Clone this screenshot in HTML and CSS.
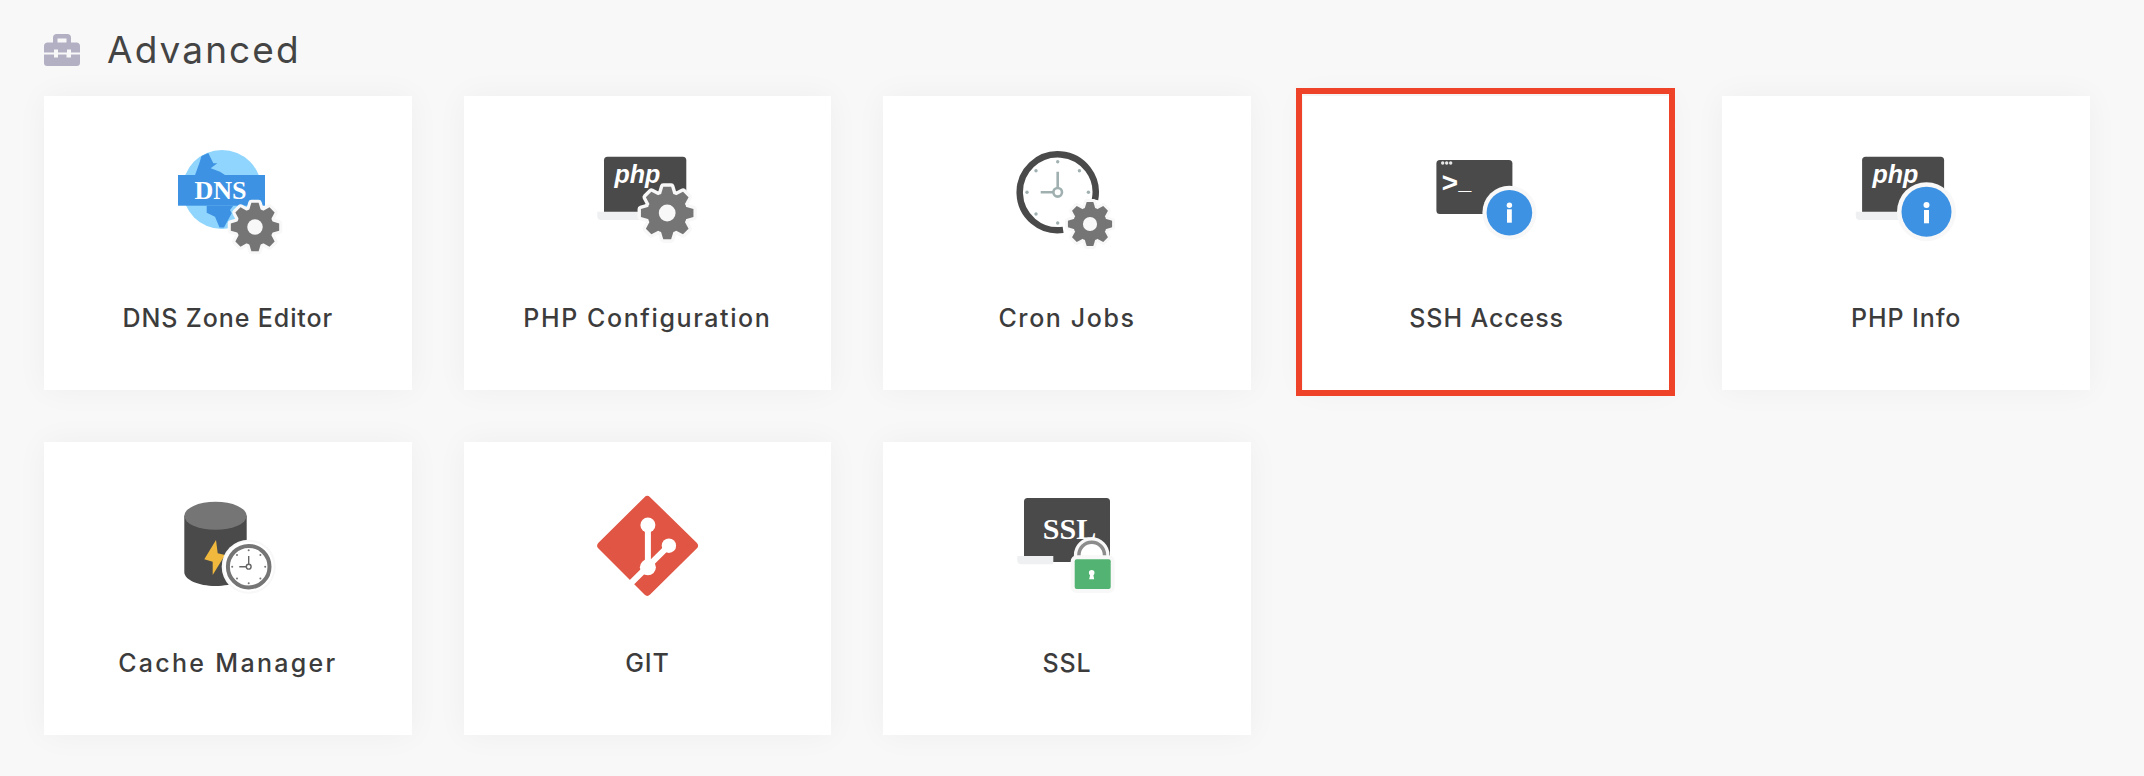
FILE: index.html
```html
<!DOCTYPE html>
<html lang="en">
<head>
<meta charset="utf-8">
<title>Advanced</title>
<link rel="stylesheet" href="styles.css">
</head>
<body>
<main class="page">
  <header class="section-head">
    <svg class="section-icon" viewBox="0 0 36 32" aria-hidden="true">
      <path d="M9 9V3.500C9 1.500 10.500 0 12.500 0h11C25.500 0 27 1.500 27 3.500V9h-4.500V4.500h-9V9z" fill="#b3b0c4"/>
      <path d="M0 12c0-2 1.500-3.500 3.500-3.500h29C34.500 8.500 36 10 36 12v6.500H27V15.500h-4v3h-9v-3H10v3H0z" fill="#b3b0c4"/>
      <path d="M0 20.500h10v3h4v-3h8.500v3h4.500v-3h9V29c0 1.700-1.300 3-3 3H3c-1.700 0-3-1.300-3-3z" fill="#b3b0c4"/>
    </svg>
    <h1 class="section-title">Advanced</h1>
  </header>

  <section class="grid">
    <a class="card">
      <svg class="icon" viewBox="0 0 140 120" aria-hidden="true">
        <defs>
          <symbol id="gear" viewBox="-120 -120 240 240">
            <g fill="#f8f8f8" stroke="#f8f8f8" stroke-width="26" stroke-linejoin="round">
              <circle r="76"/>
              <polygon points="-24,-70 -15,-100 15,-100 24,-70"/>
              <polygon points="-24,-70 -15,-100 15,-100 24,-70" transform="rotate(45)"/>
              <polygon points="-24,-70 -15,-100 15,-100 24,-70" transform="rotate(90)"/>
              <polygon points="-24,-70 -15,-100 15,-100 24,-70" transform="rotate(135)"/>
              <polygon points="-24,-70 -15,-100 15,-100 24,-70" transform="rotate(180)"/>
              <polygon points="-24,-70 -15,-100 15,-100 24,-70" transform="rotate(225)"/>
              <polygon points="-24,-70 -15,-100 15,-100 24,-70" transform="rotate(270)"/>
              <polygon points="-24,-70 -15,-100 15,-100 24,-70" transform="rotate(315)"/>
            </g>
            <g fill="#757575">
              <circle r="76"/>
              <polygon points="-24,-70 -15,-100 15,-100 24,-70"/>
              <polygon points="-24,-70 -15,-100 15,-100 24,-70" transform="rotate(45)"/>
              <polygon points="-24,-70 -15,-100 15,-100 24,-70" transform="rotate(90)"/>
              <polygon points="-24,-70 -15,-100 15,-100 24,-70" transform="rotate(135)"/>
              <polygon points="-24,-70 -15,-100 15,-100 24,-70" transform="rotate(180)"/>
              <polygon points="-24,-70 -15,-100 15,-100 24,-70" transform="rotate(225)"/>
              <polygon points="-24,-70 -15,-100 15,-100 24,-70" transform="rotate(270)"/>
              <polygon points="-24,-70 -15,-100 15,-100 24,-70" transform="rotate(315)"/>
            </g>
            <circle r="32" fill="#f8f8f8"/>
          </symbol>
        </defs>
        <circle cx="64" cy="49.500" r="39.500" fill="#90d5fd"/>
        <path d="M43.500 16 50.300 13 55.300 23.300 59.300 23.300 52.700 28.300 62 31.700 67 35 37 35 41.300 23.300z" fill="#3d92e3"/>
        <path d="M48.700 65.700H75.300L72 70 73.700 73.300 66 87.500H61.500L57 76.700 48.700 72.700z" fill="#3d92e3"/>
        <rect x="20" y="35" width="87" height="30.700" fill="#3d92e3"/>
        <text class="t-serif" x="62.500" y="59" font-size="26" text-anchor="middle">DNS</text>
        <use href="#gear" x="68" y="58" width="58" height="58"/>
      </svg>
      <span class="label label--tight">DNS Zone Editor</span>
    </a>

    <a class="card">
      <svg class="icon" viewBox="0 0 140 120" aria-hidden="true">
        <rect x="27" y="16.700" width="82.300" height="60" rx="3.500" fill="#4a4a4a"/>
        <path d="M20.300 71.700H70V80H24.300a4 4 0 0 1-4-4z" fill="#eef0f1"/>
        <text class="t-php" x="37.500" y="42.500" font-size="25">php</text>
        <use href="#gear" x="58.700" y="41.500" width="63" height="63"/>
      </svg>
      <span class="label label--wide">PHP Configuration</span>
    </a>

    <a class="card">
      <svg class="icon" viewBox="0 0 140 120" aria-hidden="true">
        <path d="M98 59.600A38 38 0 1 0 66.100 89.900" fill="none" stroke="#4a4a4a" stroke-width="6.500"/>
        <g fill="#a0b0b0">
          <circle cx="60.700" cy="21.700" r="1.700"/>
          <circle cx="60.700" cy="83" r="1.700"/>
          <circle cx="30" cy="52.300" r="1.700"/>
          <circle cx="91.400" cy="52.300" r="1.700"/>
          <circle cx="39" cy="30.700" r="1.700"/>
          <circle cx="82.400" cy="30.700" r="1.700"/>
          <circle cx="39" cy="74" r="1.700"/>
        </g>
        <path d="M60.700 31.700V48M43.700 52.300H56" stroke="#a0b0b0" stroke-width="2.600" fill="none"/>
        <circle cx="60.700" cy="52.300" r="4.300" fill="#fff" stroke="#a0b0b0" stroke-width="2.600"/>
        <use href="#gear" x="66.500" y="57.500" width="53" height="53"/>
      </svg>
      <span class="label label--wide">Cron Jobs</span>
    </a>

    <a class="card card--selected">
      <svg class="icon" viewBox="0 0 140 120" aria-hidden="true">
        <rect x="19.400" y="20" width="76" height="54" rx="3.500" fill="#4a4a4a"/>
        <g fill="#e8e8e8">
          <circle cx="25.700" cy="23" r="1.700"/>
          <circle cx="29.700" cy="23" r="1.700"/>
          <circle cx="33.700" cy="23" r="1.700"/>
        </g>
        <text class="t-term" x="24.500" y="52" font-size="28">&gt;<tspan dy="-2" font-size="22">_</tspan></text>
        <circle cx="92.400" cy="72.700" r="27" fill="#f8f8f8"/>
        <circle cx="92.400" cy="72.700" r="22.800" fill="#3d92e3"/>
        <circle cx="92.400" cy="65.300" r="2.700" fill="#fff"/>
        <rect x="90" y="69.300" width="4.800" height="13.400" fill="#fff"/>
      </svg>
      <span class="label label--tight">SSH Access</span>
    </a>

    <a class="card">
      <svg class="icon" viewBox="0 0 140 120" aria-hidden="true">
        <rect x="26.100" y="16.700" width="82" height="60" rx="3.500" fill="#4a4a4a"/>
        <path d="M19.800 71.700H70V80H23.800a4 4 0 0 1-4-4z" fill="#eef0f1"/>
        <text class="t-php" x="36.500" y="42.500" font-size="25">php</text>
        <circle cx="90.500" cy="71.700" r="29.500" fill="#f8f8f8"/>
        <circle cx="90.500" cy="71.700" r="25" fill="#3d92e3"/>
        <circle cx="90.500" cy="65" r="3" fill="#fff"/>
        <rect x="88" y="70" width="5" height="13.300" fill="#fff"/>
      </svg>
      <span class="label label--tight">PHP Info</span>
    </a>

    <a class="card">
      <svg class="icon" viewBox="0 0 140 120" aria-hidden="true">
        <path d="M26.300 29.800V86C26.300 93.700 40.300 100 57.500 100S88.700 93.700 88.700 86V29.800z" fill="#4a4a4a"/>
        <ellipse cx="57.500" cy="29.800" rx="31.200" ry="14" fill="#757575"/>
        <polygon points="58,54 46.300,73.300 54.700,75.700 54.700,89 67,69 59.700,67.300" fill="#f0b93e"/>
        <circle cx="90.700" cy="80.700" r="27" fill="#f8f8f8"/>
        <circle cx="90.700" cy="80.700" r="25" fill="#fff"/>
        <circle cx="90.700" cy="80.700" r="20.800" fill="#fff" stroke="#757575" stroke-width="4"/>
        <g fill="#757575">
          <circle cx="90.700" cy="64.200" r="1"/>
          <circle cx="90.700" cy="97.200" r="1"/>
          <circle cx="74.200" cy="80.700" r="1"/>
          <circle cx="107.200" cy="80.700" r="1"/>
          <circle cx="79" cy="69" r="1"/>
          <circle cx="102.400" cy="69" r="1"/>
          <circle cx="79" cy="92.400" r="1"/>
          <circle cx="102.400" cy="92.400" r="1"/>
        </g>
        <path d="M90.700 70V78M81.300 80.700H88" stroke="#666" stroke-width="1.400" fill="none"/>
        <circle cx="90.700" cy="80.700" r="2.400" fill="#fff" stroke="#666" stroke-width="1.400"/>
      </svg>
      <span class="label label--widest">Cache Manager</span>
    </a>

    <a class="card">
      <svg class="icon" viewBox="0 0 140 120" aria-hidden="true">
        <polygon points="70.300,14 116.900,59.700 70.300,105.700 24.300,59.700" fill="#e05543" stroke="#e05543" stroke-width="8" stroke-linejoin="round"/>
        <path d="M70.900 39V81.300M91.900 59.700 46 105" stroke="#fff" stroke-width="6" fill="none"/>
        <circle cx="70.900" cy="39" r="7.500" fill="#fff"/>
        <circle cx="91.900" cy="59.700" r="7.200" fill="#fff"/>
        <circle cx="70.900" cy="81.300" r="8" fill="#fff"/>
      </svg>
      <span class="label">GIT</span>
    </a>

    <a class="card">
      <svg class="icon" viewBox="0 0 140 120" aria-hidden="true">
        <rect x="27" y="12" width="86" height="64" rx="3.500" fill="#4a4a4a"/>
        <path d="M20.300 70H56.300V78.300H24.300a4 4 0 0 1-4-4z" fill="#eef0f1"/>
        <text class="t-serif" x="72.500" y="53.300" font-size="30" text-anchor="middle">SSL</text>
        <path d="M81.900 76V69A12.800 12.800 0 0 1 107.500 69V76" fill="#fff" stroke="#f8f8f8" stroke-width="10"/>
        <path d="M81.900 76V69A12.800 12.800 0 0 1 107.500 69V76" fill="#fff" stroke="#8c8c8c" stroke-width="3.500"/>
        <rect x="77.700" y="73.300" width="36" height="29.700" rx="2" fill="#52b372" stroke="#f8f8f8" stroke-width="8" paint-order="stroke"/>
        <circle cx="94.700" cy="86.800" r="2.800" fill="#fff"/>
        <polygon points="93.500,87 95.900,87 97.200,93.300 92.200,93.300" fill="#fff"/>
      </svg>
      <span class="label">SSL</span>
    </a>
  </section>
</main>
</body>
</html>
```

FILE: styles.css
```css
* {
  box-sizing: border-box;
}

html,
body {
  margin: 0;
  padding: 0;
  height: 100%;
  background: #f8f8f8;
  overflow: hidden;
}

body {
  font-family: Inter, "Liberation Sans", sans-serif;
}

.page {
  padding: 34px 54px 0 44px;
}

.section-head {
  display: flex;
  align-items: center;
  gap: 27px;
  height: 32px;
  margin-bottom: 30px;
}

.section-icon {
  display: block;
  width: 36px;
  height: 32px;
  flex: none;
}

.section-title {
  margin: 0;
  font-size: 37px;
  font-weight: 400;
  line-height: 30px;
  color: #444;
  letter-spacing: 2.1px;
}

.grid {
  display: grid;
  grid-template-columns: repeat(5, 1fr);
  grid-template-rows: 294px 293px;
  gap: 52px;
}

.card {
  position: relative;
  display: flex;
  flex-direction: column;
  align-items: center;
  padding-top: 44px;
  background: #fff;
  box-shadow: 0 0 30px rgba(0, 0, 0, 0.045);
}

.card:nth-child(n + 6) .label {
  margin-top: 42px;
}

.card--selected::after {
  content: "";
  position: absolute;
  top: -8px;
  left: -7px;
  right: -5px;
  bottom: -6px;
  border: 6px solid #ee4328;
}

.icon {
  display: block;
  width: 140px;
  height: 120px;
  flex: none;
}

.label {
  margin-top: 43px;
  font-size: 25px;
  font-weight: 500;
  line-height: 30px;
  color: #3c3c3c;
  letter-spacing: 0.9px;
  white-space: nowrap;
}

.label--tight {
  letter-spacing: 0.9px;
}

.label--wide {
  letter-spacing: 1.6px;
}

.label--widest {
  letter-spacing: 2.3px;
}

.t-serif {
  font-family: "Liberation Serif", serif;
  font-weight: 700;
  fill: #fff;
}

.t-php {
  font-family: "Liberation Sans", sans-serif;
  font-weight: 700;
  font-style: italic;
  fill: #fff;
}

.t-term {
  font-family: "Liberation Mono", monospace;
  font-weight: 700;
  fill: #fff;
}
```
